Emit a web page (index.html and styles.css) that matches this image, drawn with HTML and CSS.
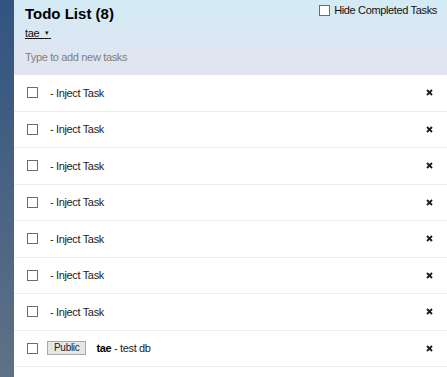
FILE: index.html
```html
<!DOCTYPE html>
<html lang="en">
<head>
    <meta charset="UTF-8">
    <meta name="viewport" content="width=device-width, initial-scale=1.0">
    <title>Todo List</title>
    <link rel="stylesheet" href="styles.css">
</head>
<body>
    <div class="sidebar"></div>
    <div class="main">
        <header class="header">
            <div class="header-top">
                <h1>Todo List (8)</h1>
                <label class="hide-completed"><input type="checkbox" class="check"> Hide Completed Tasks</label>
            </div>
            <a class="user-menu" href="#">tae &nbsp;<span class="caret">&#9662;</span>&nbsp;</a>
            <input type="text" class="new-task" placeholder="Type to add new tasks">
        </header>
        <ul class="tasks">
            <li class="task"><input type="checkbox" class="check"><span class="text">- Inject Task</span><button class="delete"><svg width="7" height="7" viewBox="0 0 7 7"><path d="M1 1L6 6M6 1L1 6" stroke="#1a1a2a" stroke-width="1.8"/></svg></button></li>
            <li class="task"><input type="checkbox" class="check"><span class="text">- Inject Task</span><button class="delete"><svg width="7" height="7" viewBox="0 0 7 7"><path d="M1 1L6 6M6 1L1 6" stroke="#1a1a2a" stroke-width="1.8"/></svg></button></li>
            <li class="task"><input type="checkbox" class="check"><span class="text">- Inject Task</span><button class="delete"><svg width="7" height="7" viewBox="0 0 7 7"><path d="M1 1L6 6M6 1L1 6" stroke="#1a1a2a" stroke-width="1.8"/></svg></button></li>
            <li class="task"><input type="checkbox" class="check"><span class="text">- Inject Task</span><button class="delete"><svg width="7" height="7" viewBox="0 0 7 7"><path d="M1 1L6 6M6 1L1 6" stroke="#1a1a2a" stroke-width="1.8"/></svg></button></li>
            <li class="task"><input type="checkbox" class="check"><span class="text">- Inject Task</span><button class="delete"><svg width="7" height="7" viewBox="0 0 7 7"><path d="M1 1L6 6M6 1L1 6" stroke="#1a1a2a" stroke-width="1.8"/></svg></button></li>
            <li class="task"><input type="checkbox" class="check"><span class="text">- Inject Task</span><button class="delete"><svg width="7" height="7" viewBox="0 0 7 7"><path d="M1 1L6 6M6 1L1 6" stroke="#1a1a2a" stroke-width="1.8"/></svg></button></li>
            <li class="task"><input type="checkbox" class="check"><span class="text">- Inject Task</span><button class="delete"><svg width="7" height="7" viewBox="0 0 7 7"><path d="M1 1L6 6M6 1L1 6" stroke="#1a1a2a" stroke-width="1.8"/></svg></button></li>
            <li class="task"><input type="checkbox" class="check"><button class="toggle-private">Public</button><span class="text"><strong>tae</strong> - test db</span><button class="delete"><svg width="7" height="7" viewBox="0 0 7 7"><path d="M1 1L6 6M6 1L1 6" stroke="#1a1a2a" stroke-width="1.8"/></svg></button></li>
        </ul>
    </div>
</body>
</html>
```

FILE: styles.css
```css
/* Estilos generales */
html, body {
    height: 100%;
}
body {
    margin: 0;
    display: flex;
    font-family: 'Liberation Sans', Arial, sans-serif;
    font-size: 11px;
    letter-spacing: -0.35px;
    color: #222;
    background-color: #fff;
    overflow: hidden;
}
.sidebar {
    width: 14px;
    flex-shrink: 0;
    background: linear-gradient(to bottom, #315481, #5f7186);
}
.main {
    flex: 1;
    display: flex;
    flex-direction: column;
}
.header {
    height: 75px;
    box-sizing: border-box;
    padding: 3px 10px 0 11px;
    background: linear-gradient(to bottom, #d3ebf5, #e2e3f0);
    display: flex;
    flex-direction: column;
}
.header-top {
    display: flex;
    justify-content: space-between;
    align-items: flex-start;
}
h1 {
    margin: 2px 0 0;
    font-size: 15px;
    font-weight: bold;
    letter-spacing: 0;
    color: #000;
    line-height: 17px;
}
.hide-completed {
    display: flex;
    align-items: center;
    gap: 4px;
    font-size: 11px;
    color: #111;
    line-height: 14px;
}
.user-menu {
    margin-top: 4px;
    align-self: flex-start;
    font-size: 11px;
    color: #111;
    line-height: 14px;
    text-decoration: underline;
}
.caret {
    font-size: 7px;
    vertical-align: 2px;
}
.new-task {
    margin-top: 10px;
    padding: 0;
    border: none;
    background: transparent;
    font-family: inherit;
    font-size: 11px;
    letter-spacing: -0.35px;
    line-height: 14px;
    outline: none;
}
.new-task::placeholder {
    color: #808080;
}
.tasks {
    list-style: none;
    margin: 0;
    padding: 0;
}
.task {
    height: 36.5px;
    box-sizing: border-box;
    display: flex;
    align-items: center;
    padding: 0 14px 0 13px;
    border-bottom: 1px solid #ededed;
}
.check {
    appearance: none;
    -webkit-appearance: none;
    width: 11px;
    height: 11px;
    margin: 0;
    border: 1px solid #6c6c6c;
    background: #fff;
    box-sizing: border-box;
    flex-shrink: 0;
}
.task .check {
    margin-right: 12px;
}
.text {
    flex: 1;
    color: #1c1c1c;
}
.text strong {
    color: #000;
}
.toggle-private {
    margin: 0 10px 0 -3px;
    padding: 0 6px;
    height: 14px;
    font-family: inherit;
    font-size: 10px;
    letter-spacing: -0.3px;
    line-height: 12px;
    color: #222;
    background-color: #e6e6e6;
    border: 1px solid #a8a8a8;
    border-radius: 0;
}
.delete {
    border: none;
    background: none;
    padding: 0;
    display: flex;
    cursor: pointer;
}
```
